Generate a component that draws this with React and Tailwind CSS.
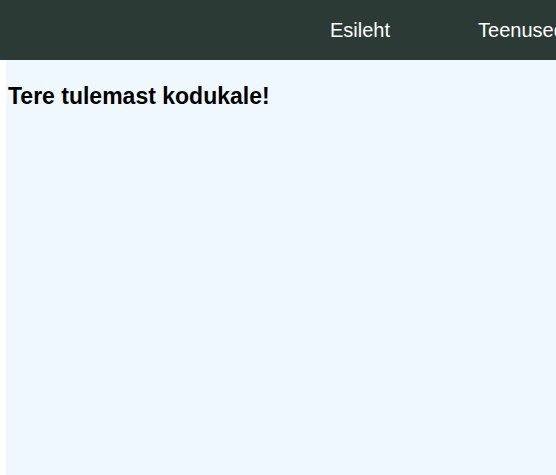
export default function App() {
  return (
    <div className="min-h-[475px] bg-white flex flex-col" style={{ fontFamily: '"Liberation Sans", Arial, sans-serif' }}>
      <header className="h-[60px] bg-[#2c3a36] flex items-center overflow-hidden">
        <nav className="flex gap-[88px] pl-[330px] text-[20px] text-white whitespace-nowrap">
          <span>Esileht</span>
          <span>Teenused</span>
        </nav>
      </header>
      <main className="ml-[6px] flex-1 bg-[#f0f8ff] pt-[22px] pl-[2px]">
        <h2 className="text-[23px] font-bold text-black leading-tight">Tere tulemast kodukale!</h2>
      </main>
    </div>
  );
}
